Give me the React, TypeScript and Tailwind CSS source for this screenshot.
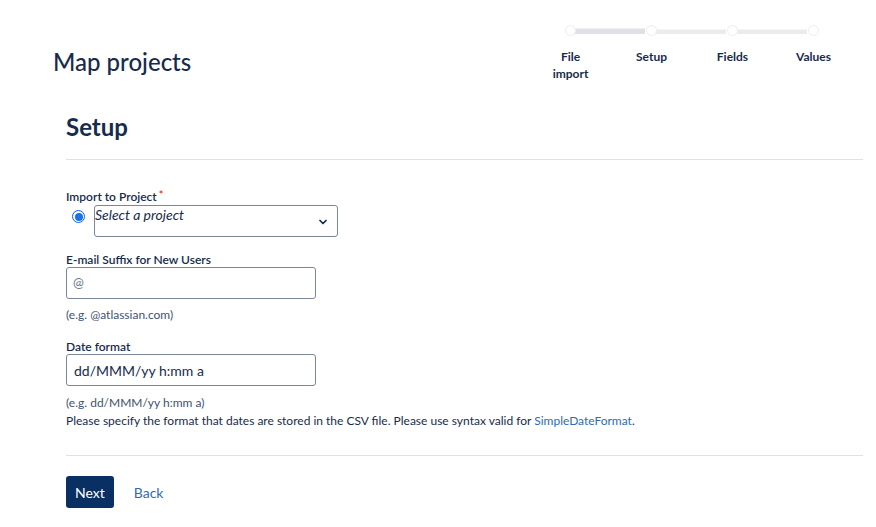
import { ChevronDown } from "lucide-react";

const steps = ["File import", "Setup", "Fields", "Values"];

const ProgressTracker = () => (
  <div className="relative w-[324px] h-[80px]">
    <div className="absolute left-[40px] top-[10px] w-[243px] flex items-center">
      <div className="w-[70px] h-[6px] ml-[5px] bg-[#dfe1e6] border-t border-[#eef0f3]" />
      <div className="w-[6px]" />
      <div className="w-[70px] h-[5px] ml-[5px] bg-[#ebecf0] border-t border-[#f4f5f7]" />
      <div className="w-[6px]" />
      <div className="w-[70px] h-[5px] ml-[5px] bg-[#ebecf0] border-t border-[#f4f5f7]" />
    </div>
    <div className="absolute left-0 top-0 flex">
      {steps.map((s, i) => (
        <div key={i} className="w-[81px] flex flex-col items-center">
          <div className="w-[11px] h-[11px] mt-[7px] rounded-full bg-white border border-[#eceef1]" />
          <div className="mt-[12px] px-[20px] text-center text-[12px] font-bold leading-[17px] text-[#172b4d]">{s}</div>
        </div>
      ))}
    </div>
  </div>
);

export default function App() {
  return (
    <div className="w-[876px] h-[527px] bg-white overflow-hidden font-['Lato',sans-serif] text-[#172b4d]">
      <div className="flex justify-between pl-[53px] pr-[22px] pt-[18px]">
        <h1 className="text-[24px] font-medium leading-[30px] mt-[29px]">Map projects</h1>
        <ProgressTracker />
      </div>
      <div className="pl-[66px] pr-[13px] mt-[14px]">
        <h2 className="text-[24px] font-bold leading-[30px] pb-[17px] border-b border-[#dfe1e6]">Setup</h2>
        <form className="pt-[30px] text-[12px]">
          <label className="block font-semibold leading-[14px] text-[#172b4d]">
            Import to Project<span className="text-[#de350b] align-top text-[11px] leading-[10px] ml-[2px]">*</span>
          </label>
          <div className="flex items-start mt-[1px]">
            <div className="w-[28px] flex pl-[6px] pt-[5px]">
              <div className="w-[13px] h-[13px] rounded-full border-[1.5px] border-[#0065ff] flex items-center justify-center">
                <div className="w-[8px] h-[8px] rounded-full bg-[#1a73e8]" />
              </div>
            </div>
            <div className="w-[244px] h-[32px] border border-[#7a869a] rounded-[3px] flex justify-between pl-[0px] pr-[8px]">
              <span className="italic text-[14px] leading-[18px] text-[#172b4d]">Select a project</span>
              <ChevronDown className="w-[12px] h-[12px] mt-[10px] text-[#172b4d]" strokeWidth={3.5} />
            </div>
          </div>

          <label className="block font-semibold leading-[14px] mt-[16px]">E-mail Suffix for New Users</label>
          <div className="w-[250px] h-[32px] border border-[#7a869a] rounded-[3px] flex items-center px-[6px] mt-[0px] text-[13px] text-[#6b778c]">
            @
          </div>
          <p className="mt-[7px] leading-[18px] text-[#42526e]">(e.g. @atlassian.com)</p>

          <label className="block font-semibold leading-[14px] mt-[16px]">Date format</label>
          <div className="w-[250px] h-[32px] border border-[#7a869a] rounded-[3px] flex items-center px-[7px] mt-[0px] text-[14px] text-[#172b4d]">
            dd/MMM/yy h:mm a
          </div>
          <p className="mt-[8px] leading-[18px] text-[#42526e]">(e.g. dd/MMM/yy h:mm a)</p>
          <p className="leading-[18px] text-[#172b4d]">
            Please specify the format that dates are stored in the CSV file. Please use syntax valid for{" "}
            <a className="text-[#2c6cb5]">SimpleDateFormat</a>.
          </p>

          <div className="border-t border-[#dfe1e6] mt-[25px] pt-[20px] flex items-center gap-[20px]">
            <button type="button" className="h-[32px] px-[9px] rounded-[3px] bg-[#0a2f63] text-white text-[14px]">
              Next
            </button>
            <a className="text-[14px] text-[#2c6cb5]">Back</a>
          </div>
        </form>
      </div>
    </div>
  );
}
